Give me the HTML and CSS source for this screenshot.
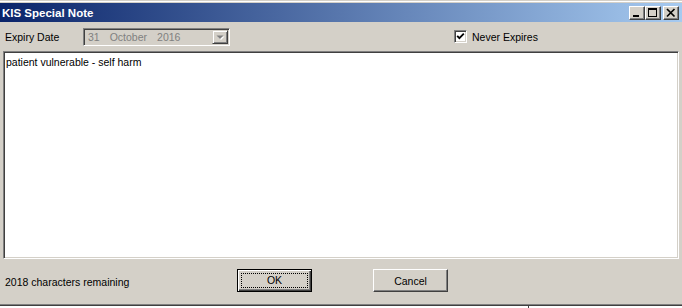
FILE: index.html
```html
<!DOCTYPE html>
<html lang="en">

<head>
    <meta charset="UTF-8" />
    <title>KIS Special Note</title>
    <link rel="stylesheet" href="styles.css">
</head>

<body>
    <div class="window">
        <div class="frame-top"></div>

        <!-- Title bar -->
        <div class="titlebar">
            <div class="title">KIS Special Note</div>
            <div class="controls">
                <span class="ctl-btn">
                    <svg width="14" height="12" viewBox="0 0 14 12"><rect x="3" y="8" width="6" height="2" fill="#000" /></svg>
                </span>
                <span class="ctl-btn">
                    <svg width="14" height="12" viewBox="0 0 14 12"><path d="M2 1h9v9h-9z M3 3h7v6h-7z" fill="#000" fill-rule="evenodd" /></svg>
                </span>
                <span class="ctl-btn close">
                    <svg width="14" height="12" viewBox="0 0 14 12"><path d="M3 2 L10.5 9.5 M10.5 2 L3 9.5" stroke="#000" stroke-width="1.7" /></svg>
                </span>
            </div>
        </div>

        <!-- Expiry options -->
        <div class="options">
            <span class="label">Expiry Date</span>
            <div class="combo">
                <span class="combo-value">
                    <span>31</span><span>October</span><span>2016</span>
                </span>
                <span class="combo-arrow">
                    <svg width="14" height="12" viewBox="0 0 14 12">
                        <path d="M4.5 5.5h7l-3.5 3.5z" fill="#fff" />
                        <path d="M3.5 4.5h7l-3.5 3.5z" fill="#808080" />
                    </svg>
                </span>
            </div>
            <div class="check">
                <span class="check-box">
                    <svg width="11" height="11" viewBox="0 0 11 11"><path d="M2.2 4.8 L4.4 7.2 L8.8 2.6" fill="none" stroke="#000" stroke-width="1.8" /></svg>
                </span>
                <span>Never Expires</span>
            </div>
        </div>

        <!-- Note text -->
        <div class="note">patient vulnerable - self harm</div>

        <!-- Footer -->
        <div class="footer">
            <span class="remaining">2018 characters remaining</span>
            <button class="btn default"><span class="focus">OK</span></button>
            <button class="btn cancel">Cancel</button>
        </div>

        <div class="frame-bottom">
            <div class="frame-dark"></div>
            <div class="behind"><span class="behind-line"></span></div>
        </div>
    </div>
</body>

</html>
```

FILE: styles.css
```css
body {
    margin: 0;
    padding: 0;
    background: #fff;
    font-family: "Liberation Sans", Arial, sans-serif;
    font-size: 10.5px;
    color: #000;
    overflow: hidden;
}

.window {
    width: 682px;
    height: 308px;
    background: #d4d0c8;
    display: flex;
    flex-direction: column;
}

.frame-top {
    height: 3px;
    box-sizing: border-box;
    background: #fff;
    border-top: 1px solid #d4d0c8;
    border-bottom: 1px solid #d4d0c8;
}

.titlebar {
    height: 19px;
    background: linear-gradient(to right, #0a246a, #a6caf0);
    display: flex;
    align-items: center;
    justify-content: space-between;
    padding: 0 3px 0 2px;
}

.title {
    color: #fff;
    font-weight: bold;
    font-size: 11.5px;
}

.controls {
    display: flex;
}

.ctl-btn {
    width: 16px;
    height: 14px;
    box-sizing: border-box;
    background: #d4d0c8;
    border: 1px solid;
    border-color: #fff #404040 #404040 #fff;
    box-shadow: inset -1px -1px #808080;
    display: flex;
}

.ctl-btn.close {
    margin-left: 2px;
}

.options {
    height: 29px;
    display: flex;
    align-items: center;
    padding-left: 5px;
}

.label {
    width: 78px;
}

.combo {
    width: 147px;
    height: 18px;
    box-sizing: border-box;
    border: 1px solid;
    border-color: #808080 #fff #fff #808080;
    box-shadow: inset 1px 1px #404040, inset -1px -1px #d4d0c8;
    padding: 1px;
    display: flex;
    align-items: center;
}

.combo-value {
    flex: 1;
    display: flex;
    gap: 10px;
    padding-left: 3px;
    color: #808080;
}

.combo-arrow {
    width: 16px;
    height: 14px;
    box-sizing: border-box;
    border: 1px solid;
    border-color: #d4d0c8 #404040 #404040 #d4d0c8;
    box-shadow: inset 1px 1px #fff, inset -1px -1px #808080;
    display: flex;
}

.check {
    margin-left: 224px;
    display: flex;
    align-items: center;
    gap: 5px;
}

.check-box {
    width: 13px;
    height: 13px;
    box-sizing: border-box;
    background: #fff;
    border: 1px solid;
    border-color: #808080 #fff #fff #808080;
    box-shadow: inset 1px 1px #404040, inset -1px -1px #d4d0c8;
    display: flex;
}

.note {
    height: 208px;
    margin: 0 3px;
    box-sizing: border-box;
    background: #fff;
    border: 1px solid;
    border-color: #808080 #fff #fff #808080;
    box-shadow: inset 1px 1px #404040, inset -1px -1px #d4d0c8;
    padding: 4px 2px;
}

.footer {
    height: 45px;
    box-sizing: border-box;
    padding: 0 0 2px 5px;
    display: flex;
    align-items: center;
}

.remaining {
    width: 232px;
    margin-top: 3px;
}

.btn {
    width: 75px;
    height: 23px;
    box-sizing: border-box;
    padding: 0;
    background: #d4d0c8;
    font-family: "Liberation Sans", Arial, sans-serif;
    font-size: 10.5px;
    color: #000;
    border: 1px solid;
    border-color: #fff #404040 #404040 #fff;
    box-shadow: inset -1px -1px #808080;
}

.btn.default {
    border-color: #000;
    box-shadow: inset 1px 1px #fff, inset -1px -1px #404040, inset -2px -2px #808080;
}

.focus {
    display: block;
    height: 15px;
    margin: 2px 3px;
    box-sizing: border-box;
    border: 1px dotted #000;
    line-height: 13px;
}

.btn.cancel {
    margin-left: 61px;
}

.frame-bottom {
    height: 4px;
    box-sizing: border-box;
    border-top: 1px solid #808080;
    display: flex;
    flex-direction: column;
}

.frame-dark {
    height: 1px;
    background: #404040;
}

.behind {
    flex: 1;
    background: #fff;
    display: flex;
}

.behind-line {
    width: 1px;
    margin-left: 528px;
    background: #404040;
}
```
